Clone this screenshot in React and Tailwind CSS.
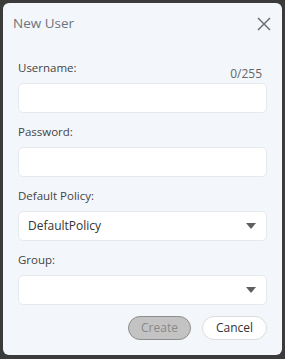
import React from 'react';

const fields = [
  { label: 'Username:', type: 'input', counter: '0/255' },
  { label: 'Password:', type: 'input' },
  { label: 'Default Policy:', type: 'select', value: 'DefaultPolicy' },
  { label: 'Group:', type: 'select', value: '' }
];

const Caret = () => (
  <svg width="10" height="6" viewBox="0 0 10 6" className="shrink-0">
    <path d="M0 0 H10 L5 6 Z" fill="#5f5f5f" />
  </svg>
);

const NewUserDialog = () => {
  return (
    <div
      className="w-[285px] h-[359px] bg-[#3b3b3b] p-[3px] pb-[4px]"
      style={{ fontFamily: '"Open Sans", "Noto Sans", sans-serif' }}
    >
      <div className="h-full bg-[#f3f6fa] rounded-[6px] flex flex-col">
        <div className="flex items-center justify-between pl-[10px] pr-[11px] pt-[4px] h-[38px]">
          <h1 className="text-[13.5px] text-[#6e747c] leading-none">New User</h1>
          <svg width="14" height="14" viewBox="0 0 14 14">
            <path d="M1 1 L13 13 M13 1 L1 13" stroke="#666" strokeWidth="1.4" />
          </svg>
        </div>

        <div className="flex flex-col px-[15px] pt-[19px] gap-[11px]">
          {fields.map((f) => (
            <div key={f.label} className="flex flex-col">
              <div className="flex items-end justify-between h-[20px] mb-[3px]">
                <span className="text-[11.5px] text-[#444] leading-none pb-[7px]">{f.label}</span>
                {f.counter && (
                  <span className="text-[12px] text-[#666] leading-none pr-[5px]">{f.counter}</span>
                )}
              </div>
              <div className="h-[30px] bg-white border border-[#e6e9ee] rounded-[5px] flex items-center justify-between pl-[9px] pr-[10px]">
                <span className="text-[12px] text-[#333]">{f.value}</span>
                {f.type === 'select' && <Caret />}
              </div>
            </div>
          ))}
        </div>

        <div className="flex justify-end gap-[11px] px-[15px] mt-[11px]">
          <button className="w-[63px] h-[24px] rounded-full bg-[#c3c3c3] border border-[#8e8e8e] text-[12px] text-[#8a8a8a]">
            Create
          </button>
          <button className="w-[65px] h-[24px] rounded-full bg-white border border-[#dcdcdc] text-[12px] text-[#333]">
            Cancel
          </button>
        </div>
      </div>
    </div>
  );
};

export default NewUserDialog;
